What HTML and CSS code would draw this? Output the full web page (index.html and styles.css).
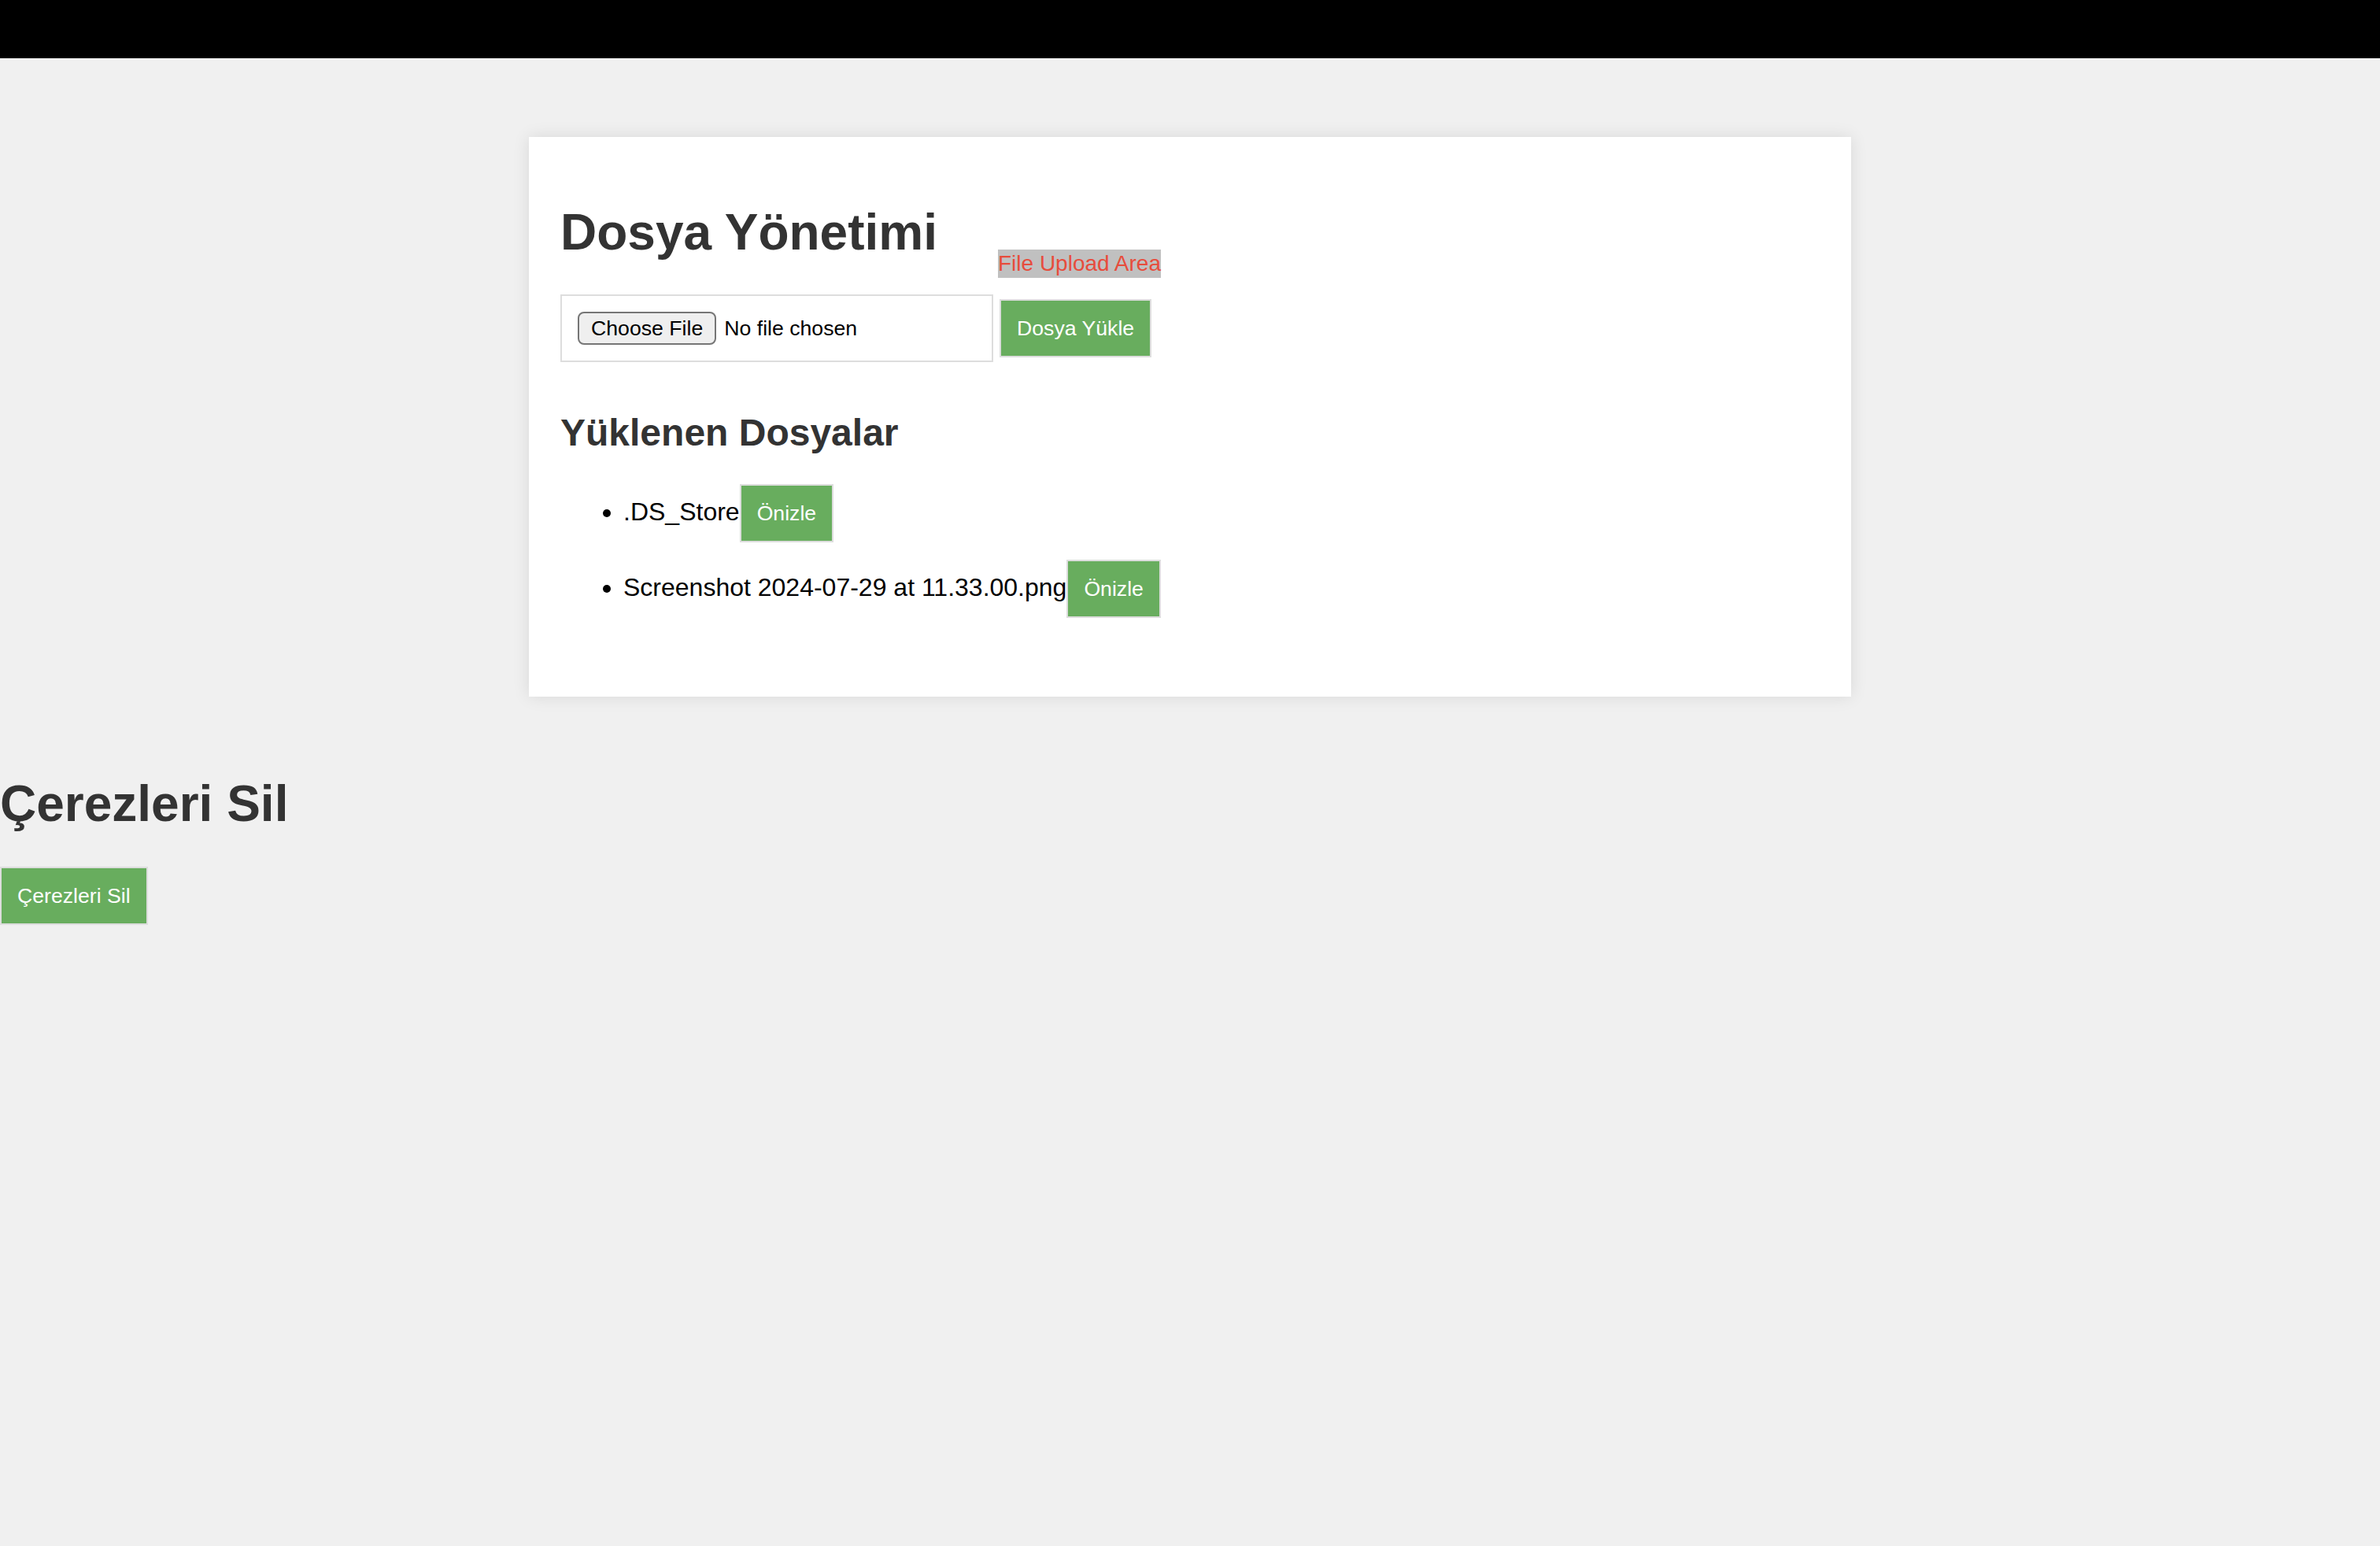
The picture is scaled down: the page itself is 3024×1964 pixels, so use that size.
FILE: index.html
```html
<!DOCTYPE html>
<html lang="tr">
<head>
<meta charset="utf-8">
<title>Dosya Yönetimi</title>
<link rel="stylesheet" href="styles.css">
</head>
<body>
<header class="topbar"></header>
<main class="card">
  <h1 class="title card-title">Dosya Yönetimi</h1>
  <form class="upload-row">
    <div class="file-field">
      <label class="file-btn">Choose File</label>
      <span class="file-name">No file chosen</span>
    </div>
    <div class="upload-action">
      <span class="upload-tag">File Upload Area</span>
      <button type="button" class="btn">Dosya Yükle</button>
    </div>
  </form>
  <h2 class="subtitle">Yüklenen Dosyalar</h2>
  <ul class="file-list">
    <li class="file-item">.DS_Store<button type="button" class="btn">Önizle</button></li>
    <li class="file-item">Screenshot 2024-07-29 at 11.33.00.png<button type="button" class="btn">Önizle</button></li>
  </ul>
</main>
<section class="cookies">
  <h1 class="title">Çerezleri Sil</h1>
  <button type="button" class="btn">Çerezleri Sil</button>
</section>
</body>
</html>
```
FILE: styles.css
```css
html, body {
  margin: 0;
  padding: 0;
}

body {
  background: #f0f0f0;
  font-family: "Liberation Sans", Arial, sans-serif;
  color: #000;
}

.topbar {
  height: 74px;
  background: #000;
}

.card {
  display: block;
  width: 1600px;
  margin: 100px auto;
  padding: 40px;
  background: #fff;
  box-shadow: 0 0 20px rgba(0, 0, 0, 0.1);
}

.title {
  font-size: 64px;
  font-weight: bold;
  line-height: 1.15;
  color: #333;
  margin: 43px 0;
}

.card-title {
  margin: 45px 0 41px;
}

.upload-row {
  display: flex;
  align-items: center;
  gap: 8px;
  margin: 0;
}

.file-field {
  box-sizing: border-box;
  width: 550px;
  display: flex;
  align-items: center;
  padding: 20px;
  border: 2px solid #ddd;
  background: #fff;
}

.file-btn {
  display: inline-block;
  font-size: 26.67px;
  line-height: 30px;
  padding: 4px 15px;
  border: 2px solid #767676;
  border-radius: 8px;
  background: #efefef;
  color: #000;
}

.file-name {
  margin-left: 10px;
  font-size: 26.67px;
  line-height: 30px;
  color: #000;
}

.upload-action {
  position: relative;
  display: flex;
}

.upload-tag {
  position: absolute;
  left: -2px;
  bottom: calc(100% + 27px);
  white-space: nowrap;
  font-size: 28px;
  line-height: 32px;
  padding: 2px 0;
  background: #c0c0c0;
  color: #e74c3c;
}

.btn {
  display: inline-block;
  vertical-align: baseline;
  font-family: "Liberation Sans", Arial, sans-serif;
  font-size: 26.67px;
  line-height: 30px;
  padding: 20px;
  margin: 0;
  border: 2px solid #ddd;
  background: #68ad5e;
  color: #fff;
  cursor: pointer;
}

.subtitle {
  font-size: 48px;
  font-weight: bold;
  line-height: 1.15;
  color: #333;
  margin: 62px 0 38px;
}

.file-list {
  margin: 0 0 60px;
  padding-left: 80px;
  font-size: 32px;
}

.file-item + .file-item {
  margin-top: 22px;
}

.cookies {
  margin: 0;
  padding: 0;
}
```
